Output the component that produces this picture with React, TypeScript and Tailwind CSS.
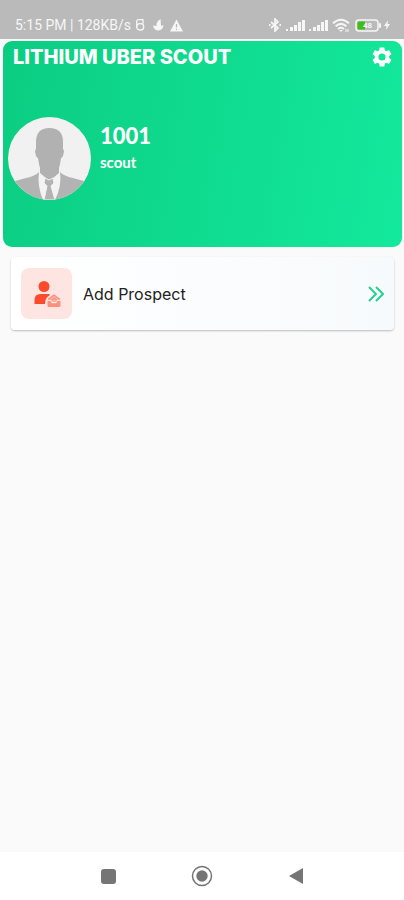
import type { ReactNode } from 'react';

interface MenuCardProps {
  label: string;
  icon: ReactNode;
}

function SignalIcon() {
  return (
    <svg width="19" height="12" viewBox="0 0 19 12" fill="#f6f6f6" aria-hidden="true">
      <rect x="0" y="10" width="2" height="2" />
      <rect x="4" y="8" width="3" height="4" />
      <rect x="8" y="6" width="3" height="6" />
      <rect x="12" y="3" width="3" height="9" />
      <rect x="16" y="1" width="3" height="11" />
    </svg>
  );
}

function StatusBar() {
  return (
    <header className="flex h-[39px] items-end justify-between bg-[#bababa] pr-[14px] pb-[6px] pl-[15px] text-[#f6f6f6]">
      <div className="flex h-4 items-center">
        <span className="font-['Roboto',sans-serif] text-[14px] leading-4 whitespace-nowrap">5:15 PM | 128KB/s</span>
        <svg className="ml-1" width="10" height="14" viewBox="0 0 10 14" fill="none" stroke="#f6f6f6" strokeWidth="1.3" aria-hidden="true">
          <path d="M8.5 1.7H3.5Q1.7 1.7 1.7 3.500V9M8 1.700v4" />
          <rect x="1.7" y="5.7" width="7" height="6.3" rx="3" />
        </svg>
        <svg className="ml-2" width="11" height="14" viewBox="0 0 11 14" fill="#f6f6f6" aria-hidden="true">
          <path d="M7.500 1Q3 3.500 3.500 8L0 7.500Q1 12.500 5.500 12.500q4.500-.5 5-5.500L8 8z" />
        </svg>
        <svg className="ml-[6px]" width="13" height="13" viewBox="0 0 13 13" aria-hidden="true">
          <path d="M6.5 .5 13 12.5H0z" fill="#f6f6f6" />
          <path d="M6.5 5v3.5M6.5 9.7v1.4" stroke="#bababa" strokeWidth="1.2" />
        </svg>
      </div>
      <div className="flex h-4 items-center">
        <svg width="14" height="14" viewBox="0 0 14 14" fill="none" stroke="#f6f6f6" strokeWidth="1.7" aria-hidden="true">
          <path d="m3 4 7 6-3 3V1l3 3-7 6" />
          <path d="M1 7h1.6M11.4 7H13" strokeWidth="2" />
        </svg>
        <span className="ml-1 flex gap-1">
          <SignalIcon />
          <SignalIcon />
        </span>
        <svg className="ml-1" width="18" height="15" viewBox="0 0 18 15" fill="none" stroke="#f6f6f6" strokeWidth="2" aria-hidden="true">
          <path d="M1 5.2Q9-1.8 17 5.2M3.6 8.2q5.4-4.6 10.8 0M6 11q3-2.4 6 0" />
          <path d="m7.2 12 1.8 2 1.8-2z" fill="#f6f6f6" stroke="none" />
          <path d="M14 11v3M16 11v3" strokeWidth="1" />
        </svg>
        <svg className="ml-[5px]" width="26" height="13" viewBox="0 0 26 13" aria-hidden="true">
          <rect x="1" y="1" width="22" height="11" rx="3" fill="none" stroke="#f6f6f6" strokeWidth="1.5" />
          <rect x="24" y="4" width="2" height="5" rx="1" fill="#f6f6f6" />
          <path d="M4 2.5h6v8H4q-1.5 0-1.5-1.5V4Q2.5 2.5 4 2.5z" fill="#42bd16" />
          <text x="8" y="9" fill="#f6f6f6" fontFamily="Roboto, sans-serif" fontSize="8" fontWeight="700">48</text>
        </svg>
        <svg className="ml-[3px]" width="6" height="10" viewBox="0 0 6 10" fill="#f6f6f6" aria-hidden="true">
          <path d="M4 0 0 6h2.5L2 10l4-6H3.5z" />
        </svg>
      </div>
    </header>
  );
}

function Avatar() {
  return (
    <svg className="shrink-0" width="83" height="83" viewBox="0 0 83 83" role="img" aria-label="Profile photo">
      <clipPath id="avatar-circle">
        <circle cx="41.5" cy="41.5" r="41.5" />
      </clipPath>
      <g clipPath="url(#avatar-circle)">
        <rect width="83" height="83" fill="#f1f1f1" />
        <path d="M0 67q9-4 18-6 9-2 13-6h21q4 4 13 6 9 2 18 6v16H0z" fill="#b3b3b3" />
        <path d="M31 55q-2 14 4 28h12q7-14 5-28z" fill="#f3f3f3" />
        <path d="M28 25Q28 11 41.5 11T55 25v7q1.500 1 .5 5-1 4-2.500 4-1 7-2 10v5l-9.500 8-9.500-8v-5q-1-3-2-10-1.500 0-2.500-4-1-4 .5-5z" fill="#b1b1b1" />
        <path d="m37 61 4 2 4-2 1 5-3 3 4 14H36l3-14-3-3z" fill="#b3b3b3" stroke="#f3f3f3" strokeWidth="1" />
      </g>
    </svg>
  );
}

function ProspectIcon() {
  return (
    <svg width="28" height="28" viewBox="0 0 28 28" aria-hidden="true">
      <circle cx="11" cy="6.5" r="5.5" fill="#fb4b2b" />
      <path d="M1.5 24v-4q0-6 6-6h9v1.5q-4.5 2-4.5 8.5z" fill="#fb4b2b" />
      <path d="m15 19 6-4.5 6 4.5v1h-3l-1 2h-4l-1-2h-3z" fill="#fcb1a4" />
      <path d="M14.5 21h3l1.2 2.2h4.6L24.5 21h3v4.5q0 1.500-1.500 1.500H16q-1.500 0-1.500-1.500z" fill="#fb9080" />
      <path d="m15 19.5 6-4.5 6 4.5M18.5 20l2.5-1.7 2.5 1.7" fill="none" stroke="#fb9080" strokeWidth="1.2" />
    </svg>
  );
}

function MenuCard({ label, icon }: MenuCardProps) {
  return (
    <button
      type="button"
      className="flex w-full items-center rounded-[4px] bg-linear-to-r from-white to-[#f7fafc] px-[10px] py-[11px] text-left shadow-[0_1px_2px_rgba(0,0,0,0.25)]"
    >
      <span className="flex size-[51px] items-center justify-center rounded-lg bg-[#ffe5e1]">{icon}</span>
      <span className="ml-[11px] flex-1 text-[16px] leading-5 text-[#222222]">{label}</span>
      <svg width="17" height="16" viewBox="0 0 17 16" fill="none" stroke="#27cf91" strokeWidth="2" aria-hidden="true">
        <path d="m2 1 7 7-7 7M9 1l7 7-7 7" />
      </svg>
    </button>
  );
}

function NavBar() {
  return (
    <nav className="flex h-12 items-center justify-center gap-[70px] bg-white">
      <button type="button" aria-label="Recent apps" className="flex size-6 items-center justify-center">
        <span className="size-[15px] rounded-[3px] bg-[#757575]" />
      </button>
      <button type="button" aria-label="Home" className="flex size-6 items-center justify-center">
        <svg width="22" height="22" viewBox="0 0 22 22">
          <circle cx="11" cy="11" r="9.5" fill="none" stroke="#757575" strokeWidth="1.5" />
          <circle cx="11" cy="11" r="5.7" fill="#757575" />
        </svg>
      </button>
      <button type="button" aria-label="Back" className="flex size-6 items-center justify-center">
        <svg width="16" height="18" viewBox="0 0 16 18">
          <path d="M15 1v16L1 9z" fill="#757575" />
        </svg>
      </button>
    </nav>
  );
}

function App() {
  return (
    <div className="flex min-h-screen flex-col bg-[#fafafa] font-['Inter',sans-serif]">
      <StatusBar />
      <main className="flex-1">
        <section className="mt-[2px] mr-[2px] ml-[3px] h-[206px] rounded-[9px] bg-linear-[100deg] from-[#0bcd82] to-[#13e99c] text-white">
          <div className="flex items-center justify-between pt-1 pr-2 pl-[10px]">
            <h1 className="text-[20px] leading-6 font-extrabold whitespace-nowrap">LITHIUM UBER SCOUT</h1>
            <button type="button" aria-label="Settings">
              <svg width="24" height="24" viewBox="0 0 24 24" fill="currentColor">
                <path d="M19.14 12.94c.04-.3.06-.61.06-.94 0-.32-.02-.64-.07-.94l2.03-1.58c.18-.14.23-.41.12-.61l-1.92-3.32c-.12-.22-.37-.29-.59-.22l-2.39.96c-.5-.38-1.03-.7-1.62-.94l-.36-2.54c-.04-.24-.24-.41-.48-.41h-3.84c-.24 0-.43.17-.47.41l-.36 2.54c-.59.24-1.13.57-1.62.94l-2.39-.96c-.22-.08-.47 0-.59.22L2.74 8.87c-.12.21-.08.47.12.61l2.03 1.58c-.05.3-.09.63-.09.94s.02.64.07.94l-2.03 1.58c-.18.14-.23.41-.12.61l1.92 3.32c.12.22.37.29.59.22l2.39-.96c.5.38 1.03.7 1.62.94l.36 2.54c.05.24.24.41.48.41h3.84c.24 0 .44-.17.47-.41l.36-2.54c.59-.24 1.13-.56 1.62-.94l2.39.96c.22.08.47 0 .59-.22l1.92-3.32c.12-.22.07-.47-.12-.61zM12 15.6A3.6 3.6 0 1 1 12 8.4a3.6 3.6 0 0 1 0 7.2z" />
              </svg>
            </button>
          </div>
          <div className="mt-12 flex items-start gap-[9px] pl-[5px] font-['Lato',sans-serif]">
            <Avatar />
            <div className="pt-[5px]">
              <p className="text-[22px] leading-7 font-black">1001</p>
              <p className="text-[15px] leading-6 font-bold">scout</p>
            </div>
          </div>
        </section>
        <div className="mt-[10px] pr-[10px] pl-[11px]">
          <MenuCard label="Add Prospect" icon={<ProspectIcon />} />
        </div>
      </main>
      <NavBar />
    </div>
  );
}

export default App;
